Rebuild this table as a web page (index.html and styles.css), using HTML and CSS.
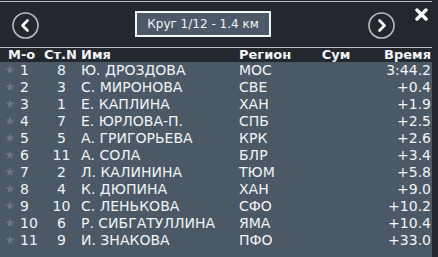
FILE: index.html
```html
<!DOCTYPE html>
<html lang="ru">
<head>
<meta charset="utf-8">
<title>Круг 1/12</title>
<link rel="stylesheet" href="styles.css">
</head>
<body>
<div class="panel">
  <div class="topbar">
    <button class="nav nav-prev" aria-label="Назад">
      <svg width="27" height="27" viewBox="0 0 27 27"><circle cx="13.5" cy="13.5" r="12.5" fill="none" stroke="#b8bcc0" stroke-width="1.6"/><path d="M15.5 8.5 L10.5 13.5 L15.5 18.5" fill="none" stroke="#ffffff" stroke-width="2.6" stroke-linecap="round" stroke-linejoin="round"/></svg>
    </button>
    <div class="lap">Круг 1/12 - 1.4 км</div>
    <button class="nav nav-next" aria-label="Вперёд">
      <svg width="27" height="27" viewBox="0 0 27 27"><circle cx="13.5" cy="13.5" r="12.5" fill="none" stroke="#b8bcc0" stroke-width="1.6"/><path d="M11.5 8.5 L16.5 13.5 L11.5 18.5" fill="none" stroke="#ffffff" stroke-width="2.6" stroke-linecap="round" stroke-linejoin="round"/></svg>
    </button>
    <button class="close" aria-label="Закрыть">
      <svg width="13" height="13" viewBox="0 0 13 13"><path d="M2 2 L11 11 M11 2 L2 11" stroke="#ffffff" stroke-width="3.4" stroke-linecap="round"/></svg>
    </button>
  </div>
  <div class="thead">
    <span></span>
    <span>М-о</span>
    <span>Ст.N</span>
    <span>Имя</span>
    <span>Регион</span>
    <span class="c">Сум</span>
    <span class="r">Время</span>
  </div>
  <div class="tbody">
    <div class="row"><span class="star"></span><span>1</span><span class="c">8</span><span>Ю. ДРОЗДОВА</span><span>МОС</span><span></span><span class="r">3:44.2</span></div>
    <div class="row"><span class="star"></span><span>2</span><span class="c">3</span><span>С. МИРОНОВА</span><span>СВЕ</span><span></span><span class="r">+0.4</span></div>
    <div class="row"><span class="star"></span><span>3</span><span class="c">1</span><span>Е. КАПЛИНА</span><span>ХАН</span><span></span><span class="r">+1.9</span></div>
    <div class="row"><span class="star"></span><span>4</span><span class="c">7</span><span>Е. ЮРЛОВА-П.</span><span>СПБ</span><span></span><span class="r">+2.5</span></div>
    <div class="row"><span class="star"></span><span>5</span><span class="c">5</span><span>А. ГРИГОРЬЕВА</span><span>КРК</span><span></span><span class="r">+2.6</span></div>
    <div class="row"><span class="star"></span><span>6</span><span class="c">11</span><span>А. СОЛА</span><span>БЛР</span><span></span><span class="r">+3.4</span></div>
    <div class="row"><span class="star"></span><span>7</span><span class="c">2</span><span>Л. КАЛИНИНА</span><span>ТЮМ</span><span></span><span class="r">+5.8</span></div>
    <div class="row"><span class="star"></span><span>8</span><span class="c">4</span><span>К. ДЮПИНА</span><span>ХАН</span><span></span><span class="r">+9.0</span></div>
    <div class="row"><span class="star"></span><span>9</span><span class="c">10</span><span>С. ЛЕНЬКОВА</span><span>СФО</span><span></span><span class="r">+10.2</span></div>
    <div class="row"><span class="star"></span><span>10</span><span class="c">6</span><span>Р. СИБГАТУЛЛИНА</span><span>ЯМА</span><span></span><span class="r">+10.4</span></div>
    <div class="row"><span class="star"></span><span>11</span><span class="c">9</span><span>И. ЗНАКОВА</span><span>ПФО</span><span></span><span class="r">+33.0</span></div>
  </div>
</div>
</body>
</html>
```

FILE: styles.css
```css
html, body {
  margin: 0;
  padding: 0;
  background: #23282e;
}
body {
  width: 438px;
  height: 257px;
  overflow: hidden;
  font-family: "DejaVu Sans", Verdana, sans-serif;
  color: #f2f4f6;
}
.panel {
  width: 432px;
  margin-top: 1px;
  border-top: 1px solid #b9bdc2;
}
.topbar {
  height: 45px;
  display: flex;
  align-items: flex-start;
  padding-left: 12px;
}
.nav, .close {
  border: 0;
  padding: 0;
  margin: 0;
  background: none;
  display: block;
  line-height: 0;
}
.nav { margin-top: 10px; }
.nav-prev { margin-right: 96px; }
.nav-next { margin-left: 97px; }
.close { margin-top: 6px; margin-left: 20px; }
.lap {
  margin-top: 9px;
  width: 132px;
  height: 22px;
  border: 2px solid #f2f4f6;
  background: #4c5968;
  font-size: 12px;
  line-height: 22px;
  text-align: center;
  white-space: nowrap;
}
.thead {
  border-top: 1px solid #b9bdc2;
  height: 14px;
  display: grid;
  grid-template-columns: 8px 36px 37px 158px 71px 52px 69px;
  font-size: 13px;
  font-weight: bold;
  line-height: 14px;
}
.tbody {
  background: #4b5866;
  height: 195px;
}
.row {
  display: grid;
  grid-template-columns: 20px 22px 39px 158px 71px 52px 69px;
  height: 17px;
  font-size: 14px;
  line-height: 17px;
  white-space: nowrap;
}
.c { text-align: center; }
.r { text-align: right; }
.star {
  margin: 3px 0 0 5px;
  width: 10px;
  height: 10px;
  background: #6b7784;
  clip-path: polygon(50% 0%, 61% 35%, 98% 35%, 68% 57%, 79% 91%, 50% 70%, 21% 91%, 32% 57%, 2% 35%, 39% 35%);
}
```
